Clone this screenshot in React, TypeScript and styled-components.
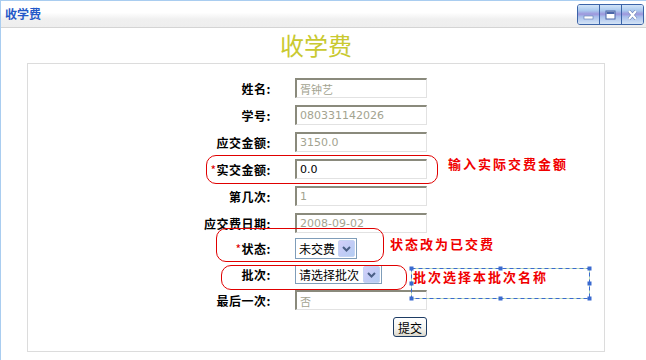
import styled, { createGlobalStyle } from "styled-components";

const GlobalStyle = createGlobalStyle`
  html, body {
    margin: 0;
    padding: 0;
    background: #ffffff;
  }
  body {
    font-family: "Noto Sans CJK SC", "Liberation Sans", sans-serif;
    font-size: 12px;
  }
`;

const Window = styled.div`
  position: relative;
  width: 646px;
  height: 360px;
  box-sizing: border-box;
  border-top: 1px solid #a9cdf0;
  border-left: 1px solid #a9cdf0;
  overflow: hidden;
  background: #fff;
`;

const TitleBar = styled.div`
  height: 27px;
  box-sizing: border-box;
  display: flex;
  align-items: center;
  justify-content: space-between;
  padding: 0 2px 0 4px;
  background: linear-gradient(#ffffff 0%, #ffffff 45%, #f0f0f0 70%, #eeeeee 100%);
  border-bottom: 1px solid #d4d4d4;
`;

const TitleText = styled.span`
  color: #2458c8;
  font-weight: bold;
  font-size: 12px;
  line-height: 1;
`;

const WinButtons = styled.div`
  display: flex;
  height: 19px;
  border: 1px solid #3c64a8;
  border-radius: 3px;
  overflow: hidden;
  margin-top: 1px;
`;

const WinButton = styled.div`
  width: 21px;
  height: 19px;
  display: flex;
  align-items: center;
  justify-content: center;
  background: linear-gradient(
    #d2e4f8 0%,
    #a9c8ee 30%,
    #9d96dc 48%,
    #a9c0ec 62%,
    #d4e4f6 100%
  );
  & + & {
    border-left: 1px solid #3c64a8;
  }
`;

const Content = styled.div`
  width: 578px;
  margin-left: 26px;
`;

const Heading = styled.h1`
  margin: 5px 0 6px;
  text-align: center;
  font-size: 24px;
  line-height: 24px;
  font-weight: normal;
  color: #c9c930;
  font-family: "Noto Sans CJK SC", sans-serif;
`;

const FormBox = styled.div`
  box-sizing: border-box;
  border: 1px solid #dcdcdc;
  padding: 14px 0 14px;
`;

const Row = styled.div<{ $top: number; $height: number }>`
  display: grid;
  grid-template-columns: 243px 132px;
  column-gap: 24px;
  align-items: center;
  height: ${(p) => p.$height}px;
  margin-top: ${(p) => p.$top}px;
`;

const Label = styled.label`
  text-align: right;
  font-weight: bold;
  font-size: 12px;
  letter-spacing: 0.5px;
  color: #000;
  white-space: nowrap;
`;

const Star = styled.span`
  color: #e00000;
  font-weight: normal;
`;

const TextInput = styled.input<{ $active?: boolean }>`
  box-sizing: border-box;
  width: 132px;
  height: 20px;
  margin: 0;
  padding: 0 3px;
  border-top: 2px solid #8a8a7c;
  border-left: 2px solid #8a8a7c;
  border-right: 1px solid #e2e2e2;
  border-bottom: 1px solid #e2e2e2;
  background: #fff;
  outline: none;
  font-family: "DejaVu Sans", "Noto Sans CJK SC", sans-serif;
  font-size: 11px;
  color: ${(p) => (p.$active ? "#000" : "#a3a390")};
`;

const SelectBox = styled.div<{ $width: number; $height: number }>`
  box-sizing: border-box;
  width: ${(p) => p.$width}px;
  height: ${(p) => p.$height}px;
  border: 1px solid #7f9db9;
  background: #fff;
  display: flex;
  align-items: center;
  justify-content: space-between;
  padding: 0 1px 0 3px;
  font-size: 12px;
  color: #000;
`;

const ArrowBtn = styled.div`
  width: 15px;
  height: 15px;
  border-radius: 2px;
  display: flex;
  align-items: center;
  justify-content: center;
  background: linear-gradient(135deg, #d4d0fa 0%, #c2ccf6 50%, #b4cdf2 100%);
  border: 1px solid #c6d4f4;
`;

const SubmitButton = styled.button`
  grid-column: 2;
  justify-self: end;
  box-sizing: border-box;
  width: 34px;
  height: 20px;
  padding: 0;
  border: 1px solid #1e3c64;
  border-radius: 3px;
  background: linear-gradient(#ffffff 0%, #f4f3ee 60%, #dcd8cc 100%);
  font-family: "Noto Sans CJK SC", sans-serif;
  font-size: 12px;
  color: #000;
`;

const Ring = styled.div<{ $x: number; $y: number; $w: number; $h: number }>`
  position: absolute;
  left: ${(p) => p.$x}px;
  top: ${(p) => p.$y}px;
  width: ${(p) => p.$w}px;
  height: ${(p) => p.$h}px;
  box-sizing: border-box;
  border: 1px solid #e00000;
  border-radius: 10px;
  pointer-events: none;
`;

const Note = styled.div<{ $x: number; $y: number }>`
  position: absolute;
  left: ${(p) => p.$x}px;
  top: ${(p) => p.$y}px;
  color: #f00000;
  font-weight: bold;
  font-size: 13px;
  line-height: 14px;
  letter-spacing: 2px;
  white-space: nowrap;
`;

const SelectFrame = styled.svg`
  position: absolute;
  left: 408px;
  top: 265px;
  overflow: visible;
`;

function Chevron() {
  return (
    <svg width="9" height="6" viewBox="0 0 9 6">
      <path d="M1 1 L4.5 4.5 L8 1" fill="none" stroke="#4a5f86" strokeWidth="2" />
    </svg>
  );
}

function Select({ text, width, height }: { text: string; width: number; height: number }) {
  return (
    <SelectBox $width={width} $height={height}>
      <span>{text}</span>
      <ArrowBtn>
        <Chevron />
      </ArrowBtn>
    </SelectBox>
  );
}

const fields: { label: string; value: string; star?: boolean; active?: boolean }[] = [
  { label: "姓名", value: "胥钟艺" },
  { label: "学号", value: "080331142026" },
  { label: "应交金额", value: "3150.0" },
  { label: "实交金额", value: "0.0", star: true, active: true },
  { label: "第几次", value: "1" },
  { label: "应交费日期", value: "2008-09-02" },
];

export default function App() {
  // handles of the selected text box
  const handles = [
    [0, 0], [89, 0], [178, 0],
    [0, 15], [178, 15],
    [0, 30], [89, 30], [178, 30],
  ];

  return (
    <>
      <GlobalStyle />
      <Window>
        <TitleBar>
          <TitleText>收学费</TitleText>
          <WinButtons>
            <WinButton>
              <svg width="11" height="10" viewBox="0 0 11 10">
                <rect x="1" y="6" width="9" height="3" fill="#fff" stroke="#5a78b0" strokeWidth="0.6" />
              </svg>
            </WinButton>
            <WinButton>
              <svg width="11" height="10" viewBox="0 0 11 10">
                <rect x="1" y="1" width="9" height="8" fill="#fff" stroke="#4a66a8" strokeWidth="1" />
                <rect x="1.5" y="1.5" width="8" height="2.5" fill="#4a66a8" />
              </svg>
            </WinButton>
            <WinButton>
              <svg width="11" height="10" viewBox="0 0 11 10">
                <path d="M2 1 L9 9 M9 1 L2 9" stroke="#6d86b8" strokeWidth="3.4" />
                <path d="M2 1 L9 9 M9 1 L2 9" stroke="#fff" strokeWidth="2.2" />
              </svg>
            </WinButton>
          </WinButtons>
        </TitleBar>

        <Content>
          <Heading>收学费</Heading>
          <FormBox>
            {fields.map((f, i) => (
              <Row key={f.label} $top={i === 0 ? 0 : 7} $height={20}>
                <Label>
                  {f.star && <Star>*</Star>}
                  {f.label}:
                </Label>
                <TextInput readOnly defaultValue={f.value} $active={f.active} />
              </Row>
            ))}
            <Row $top={5} $height={21}>
              <Label>
                <Star>*</Star>状态:
              </Label>
              <Select text="未交费" width={62} height={21} />
            </Row>
            <Row $top={6} $height={19}>
              <Label>批次:</Label>
              <Select text="请选择批次" width={87} height={19} />
            </Row>
            <Row $top={6} $height={20}>
              <Label>最后一次:</Label>
              <TextInput readOnly defaultValue="否" />
            </Row>
            <Row $top={7} $height={20}>
              <SubmitButton>提交</SubmitButton>
            </Row>
          </FormBox>
        </Content>

        <Ring $x={205} $y={154} $w={232} $h={29} />
        <Ring $x={215} $y={227} $w={168} $h={34} />
        <Ring $x={220} $y={264} $w={186} $h={25} />

        <Note $x={447} $y={156}>输入实际交费金额</Note>
        <Note $x={389} $y={236}>状态改为已交费</Note>
        <Note $x={412} $y={269}>批次选择本批次名称</Note>

        <SelectFrame width="182" height="34" viewBox="-2 -2 182 34">
          <rect x="0.5" y="0.5" width="178" height="30" fill="none" stroke="#bfe0b8" strokeWidth="1" />
          <rect
            x="0.5"
            y="0.5"
            width="178"
            height="30"
            fill="none"
            stroke="#3a6ad0"
            strokeWidth="1"
            strokeDasharray="4 3"
          />
          {handles.map(([hx, hy], i) => (
            <rect key={i} x={hx - 1.5} y={hy - 1.5} width="4" height="4" fill="#3a6ad0" />
          ))}
        </SelectFrame>
      </Window>
    </>
  );
}
